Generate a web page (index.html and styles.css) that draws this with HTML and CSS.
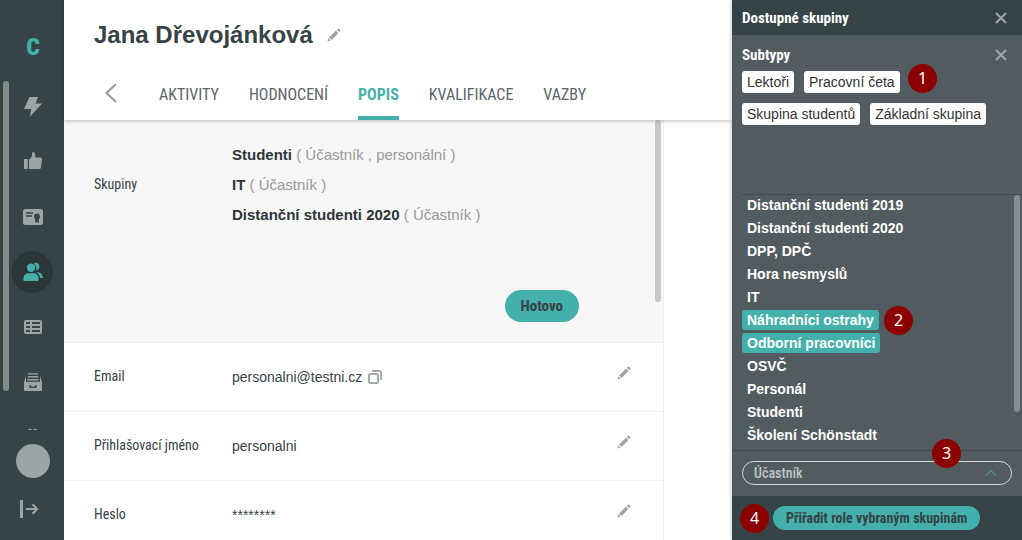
FILE: index.html
```html
<!DOCTYPE html>
<html lang="cs">
<head>
    <meta charset="UTF-8">
    <meta name="viewport" content="width=device-width, initial-scale=1">
    <title>Jana Dřevojánková</title>
    <link rel="stylesheet" href="styles.css">
</head>
<body>
    <!-- shared icons -->
    <svg class="sprite" aria-hidden="true">
        <symbol id="pencil" viewBox="0 0 14 14">
            <path d="M0.5 13.5 L1.4 10.2 L3.8 12.6 Z M2.1 9.4 L9 2.6 L11.4 5 L4.6 11.9 Z M9.8 1.8 L11 .7 Q11.5.3 12 .7 L13.3 2 Q13.7 2.5 13.3 3 L12.2 4.2 Z"/>
        </symbol>
        <symbol id="close" viewBox="0 0 12 12">
            <path d="M1 1 L11 11 M11 1 L1 11"/>
        </symbol>
    </svg>

    <div class="app">
        <aside class="sidebar">
            <a class="logo" href="#">C</a>
            <nav class="menu">
                <div class="scrollbar menu-scroll"></div>
                <a class="menu-item" href="#" aria-label="Aktivity">
                    <svg width="20" height="20" viewBox="0 0 20 20"><path d="M6.5 0 H15 L12.5 6.5 H19 L7 19.8 L8.2 12 H1 Z"/></svg>
                </a>
                <a class="menu-item" href="#" aria-label="Hodnocení">
                    <svg width="20" height="20" viewBox="0 0 20 20"><path d="M1 7 H4.8 V17 H1 Z M6 7.5 L9 4.5 V.8 Q9.2 0 10.3 0 Q12.3.5 12.3 2.7 V5.4 H17.5 Q19.3 5.6 19 7.4 L18 15.5 Q17.6 17 16 17 H6 Z"/></svg>
                </a>
                <a class="menu-item" href="#" aria-label="Kvalifikace">
                    <svg width="20" height="20" viewBox="0 0 20 20">
                        <rect x="0" y="2" width="20" height="16" rx="2.5"/>
                        <path class="cut thin" d="M3 6 H10 M3 9 H9"/>
                        <circle class="hole" cx="14" cy="9.5" r="3"/>
                        <path class="hole" d="M12.2 11 H15.8 V16 L14 15 L12.2 16 Z"/>
                    </svg>
                </a>
                <a class="menu-item active" href="#" aria-label="Lidé">
                    <svg width="20" height="20" viewBox="0 0 20 20">
                        <path d="M11 1.5 Q12 .6 13.3 .8 Q16.4 1.3 16.4 4.5 Q16.4 8 13.2 8.6 Q14.2 5 11 1.5 Z M13.5 10 Q19.5 10 20 16 H17 Q16.7 12 13.5 10 Z"/>
                        <circle cx="8" cy="5.8" r="4.2"/>
                        <path d="M.5 19 V16 Q1 11.3 5.5 11.3 H10.5 Q15 11.3 15.5 16 V19 Z"/>
                    </svg>
                </a>
                <a class="menu-item" href="#" aria-label="Tabulky">
                    <svg width="20" height="20" viewBox="0 0 20 20">
                        <rect x="1" y="3" width="18" height="14" rx="2"/>
                        <path class="cut" d="M3 6 H7 M3 10 H7 M3 14 H7 M9 6 H17 M9 10 H17 M9 14 H17"/>
                    </svg>
                </a>
                <a class="menu-item" href="#" aria-label="Archiv">
                    <svg width="20" height="20" viewBox="0 0 20 20">
                        <path d="M3 3.5 V10.5 H17 V3.5 L19 10.5 V17.5 Q19 19 17.6 19 H2.4 Q1 19 1 17.5 V10.5 Z"/>
                        <path class="hole" d="M3.4 3 H16.6 V10 H3.4 Z"/>
                        <path d="M5 1.2 H15 V2.4 H5 Z M4.7 4 H15.3 V5.4 H4.7 Z M4.4 7 H15.6 V8.4 H4.4 Z M3 9.8 H17 V11 H3 Z"/>
                        <path class="cut thin" d="M7.2 13 V15.2 H12.8 V13"/>
                    </svg>
                </a>
                <a class="menu-item" href="#" aria-label="Další">
                    <svg width="20" height="20" viewBox="0 0 20 20"><path d="M5 3 Q7 .6 9 3 V9 H5 Z M10 3 Q12 .6 14 3 V9 H10 Z"/></svg>
                </a>
            </nav>
            <div class="user">
                <a class="avatar" href="#" aria-label="Profil"></a>
                <button class="icon-btn logout" aria-label="Odhlásit">
                    <svg width="20" height="20" viewBox="0 0 20 20"><path d="M2.5 1 V19" stroke-width="3"/><path d="M7 10 H18 M13.5 5.3 L18.2 10 L13.5 14.7" stroke-width="2"/></svg>
                </button>
            </div>
        </aside>

        <main class="content">
            <header class="header">
                <div class="title">
                    <h1>Jana Dřevojánková</h1>
                    <button class="icon-btn" aria-label="Upravit jméno"><svg class="pencil"><use href="#pencil"/></svg></button>
                </div>
                <nav class="tabs">
                    <button class="icon-btn back" aria-label="Zpět">
                        <svg width="12" height="20" viewBox="0 0 12 20"><path d="M11 1 L1.5 10 L11 19"/></svg>
                    </button>
                    <a class="tab" href="#">AKTIVITY</a>
                    <a class="tab" href="#">HODNOCENÍ</a>
                    <a class="tab active" href="#">POPIS</a>
                    <a class="tab" href="#">KVALIFIKACE</a>
                    <a class="tab" href="#">VAZBY</a>
                </nav>
            </header>

            <div class="details">
                <div class="scrollbar details-scroll"></div>
                <section class="row groups">
                    <div class="label">Skupiny</div>
                    <div class="value">
                        <ul class="group-list">
                            <li><b>Studenti</b> ( Účastník , personální )</li>
                            <li><b>IT</b> ( Účastník )</li>
                            <li><b>Distanční studenti 2020</b> ( Účastník )</li>
                        </ul>
                        <button class="btn btn-done">Hotovo</button>
                    </div>
                </section>
                <section class="row">
                    <div class="label">Email</div>
                    <div class="value">personalni@testni.cz
                        <button class="icon-btn copy" aria-label="Kopírovat">
                            <svg width="14" height="14" viewBox="0 0 14 14"><rect x="1" y="4" width="9" height="9" rx="1.5"/><path d="M4 1 H11 Q13 1 13 3 V10"/></svg>
                        </button>
                    </div>
                    <button class="icon-btn edit" aria-label="Upravit email"><svg class="pencil"><use href="#pencil"/></svg></button>
                </section>
                <section class="row">
                    <div class="label">Přihlašovací jméno</div>
                    <div class="value">personalni</div>
                    <button class="icon-btn edit" aria-label="Upravit přihlašovací jméno"><svg class="pencil"><use href="#pencil"/></svg></button>
                </section>
                <section class="row">
                    <div class="label">Heslo</div>
                    <div class="value">********</div>
                    <button class="icon-btn edit" aria-label="Upravit heslo"><svg class="pencil"><use href="#pencil"/></svg></button>
                </section>
            </div>
        </main>

        <aside class="panel">
            <header class="panel-header">
                <h2>Dostupné skupiny</h2>
                <button class="icon-btn" aria-label="Zavřít"><svg class="close"><use href="#close"/></svg></button>
            </header>
            <section class="subtypes">
                <div class="subtypes-head">
                    <h2>Subtypy</h2>
                    <button class="icon-btn" aria-label="Zrušit výběr"><svg class="close"><use href="#close"/></svg></button>
                </div>
                <div class="chips">
                    <button class="chip">Lektoři</button>
                    <button class="chip">Pracovní četa</button>
                    <button class="chip">Skupina studentů</button>
                    <button class="chip">Základní skupina</button>
                </div>
                <span class="marker marker-1">1</span>
            </section>
            <section class="available">
                <div class="scrollbar available-scroll"></div>
                <ul>
                    <li><button class="option">Distanční studenti 2019</button></li>
                    <li><button class="option">Distanční studenti 2020</button></li>
                    <li><button class="option">DPP, DPČ</button></li>
                    <li><button class="option">Hora nesmyslů</button></li>
                    <li><button class="option">IT</button></li>
                    <li><button class="option selected">Náhradníci ostrahy</button><span class="marker marker-2">2</span></li>
                    <li><button class="option selected">Odborní pracovníci</button></li>
                    <li><button class="option">OSVČ</button></li>
                    <li><button class="option">Personál</button></li>
                    <li><button class="option">Studenti</button></li>
                    <li><button class="option">Školení Schönstadt</button></li>
                </ul>
            </section>
            <section class="role">
                <select class="role-select" aria-label="Role">
                    <option>Účastník</option>
                </select>
                <svg class="role-arrow" width="12" height="8" viewBox="0 0 12 8"><path d="M1 6.5 L6 1.5 L11 6.5"/></svg>
                <span class="marker marker-3">3</span>
            </section>
            <footer class="panel-footer">
                <span class="marker">4</span>
                <button class="btn btn-assign">Přiřadit role vybraným skupinám</button>
            </footer>
        </aside>
    </div>
</body>
</html>
```
FILE: styles.css
```css
:root {
    --teal: #44b0ab;
    --dark: #364347;
    --slate: #525c60;
    --grey: #9da4a6;
    --line: #f0f0f0;
    --condensed: "Roboto Condensed", "Liberation Sans Narrow", Roboto, sans-serif;
}

* {
    box-sizing: border-box;
}

body {
    margin: 0;
    font-family: "Liberation Sans", Arial, sans-serif;
    font-size: 14px;
    color: var(--dark);
    background: white;
}

h1, h2, ul {
    margin: 0;
    padding: 0;
    list-style: none;
}

a {
    color: inherit;
    text-decoration: none;
}

button {
    border: none;
    font: inherit;
    cursor: pointer;
}

svg {
    display: block;
}

.sprite {
    position: absolute;
    width: 0;
    height: 0;
}

.app {
    display: flex;
    height: 100vh;
    overflow: hidden;
}

.icon-btn {
    padding: 0;
    background: none;
    flex: none;
}

.pencil {
    width: 14px;
    height: 14px;
    fill: var(--grey);
}

.close {
    width: 12px;
    height: 12px;
    stroke: #a0a6a8;
    stroke-width: 2;
}

.scrollbar {
    position: absolute;
    width: 6px;
    border-radius: 3px;
}

/* sidebar */

.sidebar {
    flex: none;
    width: 64px;
    display: flex;
    flex-direction: column;
    background: var(--dark);
}

.logo {
    padding: 32px 0 18px 2px;
    font: 900 24px/30px var(--condensed);
    text-align: center;
    color: var(--teal);
}

.menu {
    position: relative;
    flex: 1;
    min-height: 0;
    overflow: hidden;
}

.menu-scroll {
    top: 1px;
    left: 3px;
    height: 310px;
    background: #848b8d;
}

.menu-item {
    display: flex;
    align-items: center;
    justify-content: center;
    height: 55px;
    padding: 0 0 2px 2px;
}

.menu-item svg {
    fill: var(--grey);
}

.menu-item .cut {
    fill: none;
    stroke: var(--dark);
    stroke-width: 2;
}

.menu-item .thin {
    stroke-width: 1.5;
}

.menu-item .hole {
    fill: var(--dark);
}

.menu-item.active {
    width: 42px;
    height: 42px;
    margin: 6px 11px 7px;
    padding-bottom: 0;
    border-radius: 50%;
    background: #2b3639;
}

.menu-item.active svg {
    fill: var(--teal);
}

.user {
    display: flex;
    flex-direction: column;
    align-items: center;
    padding: 14px 0 21px 2px;
}

.avatar {
    width: 34px;
    height: 34px;
    border-radius: 50%;
    background: var(--grey);
}

.logout {
    margin: 21px 8px 0 0;
}

.logout svg {
    fill: none;
    stroke: var(--grey);
}

/* person detail */

.content {
    flex: 1;
    min-width: 0;
}

.header {
    position: relative;
    z-index: 1;
    padding: 20px 30px 0;
    background: white;
    box-shadow: 0 1px 4px rgba(0, 0, 0, 0.25);
}

.title {
    display: flex;
    align-items: center;
    gap: 14px;
    height: 30px;
}

h1 {
    font-size: 24px;
    line-height: 30px;
}

.tabs {
    display: flex;
    gap: 30px;
    height: 70px;
    padding: 18px 0 0 11px;
}

.back {
    height: 50px;
    margin-right: 12px;
}

.back svg {
    fill: none;
    stroke: #999;
    stroke-width: 2;
}

.tab {
    font: 16px/54px var(--condensed);
    color: #5c6569;
}

.tab.active {
    font-weight: bold;
    color: var(--teal);
    border-bottom: 4px solid var(--teal);
}

.details {
    position: relative;
    max-width: 600px;
    border-right: 1px solid var(--line);
}

.details-scroll {
    top: 0;
    right: 2px;
    height: 182px;
    background: #c8c8c8;
}

.row {
    display: flex;
    align-items: center;
    height: 69px;
    padding: 0 32px 0 30px;
    border-bottom: 1px solid var(--line);
}

.label {
    flex: none;
    width: 138px;
    padding-bottom: 2px;
    font: 14px/20px var(--condensed);
}

.value {
    flex: 1;
    display: flex;
    align-items: center;
    gap: 6px;
}

.edit {
    padding-bottom: 8px;
}

.copy svg {
    fill: none;
    stroke: #a5abad;
    stroke-width: 2;
}

.groups {
    align-items: flex-start;
    height: auto;
    padding: 20px 84px 20px 30px;
    background: #f7f7f7;
}

.groups .label {
    padding-top: 34px;
}

.groups .value {
    flex-direction: column;
    align-items: stretch;
    gap: 60px;
}

.group-list {
    font-size: 15px;
    line-height: 30px;
    color: #999;
}

.group-list b {
    color: #2b3639;
}

.btn {
    border-radius: 16px;
    background: var(--teal);
    color: var(--dark);
    font-family: var(--condensed);
    font-weight: bold;
}

.btn-done {
    align-self: flex-end;
    height: 32px;
    padding: 0 16px;
    font-size: 15px;
}

/* right panel */

.panel {
    flex: none;
    width: 290px;
    display: flex;
    flex-direction: column;
    position: relative;
    z-index: 2;
    background: var(--slate);
    box-shadow: 0 0 4px rgba(0, 0, 0, 0.3);
    color: white;
}

h2 {
    font: bold 15px/20px var(--condensed);
}

.panel-header, .subtypes-head {
    display: flex;
    align-items: center;
    justify-content: space-between;
}

.panel-header {
    height: 35px;
    padding: 0 15px 0 10px;
    background: var(--dark);
}

.subtypes {
    position: relative;
    height: 159px;
    padding: 10px 15px 0 10px;
}

.chips {
    display: flex;
    flex-wrap: wrap;
    gap: 10px;
    padding-top: 6px;
}

.chip {
    height: 22px;
    padding: 0 5px;
    border-radius: 3px;
    background: white;
    color: #333;
}

.available {
    position: relative;
    flex: 1;
    min-height: 0;
    margin-left: 10px;
    overflow: hidden;
    border-top: 1px solid #414a4d;
}

.available-scroll {
    top: 0;
    right: 2px;
    height: 217px;
    background: #868c8f;
}

.available li {
    display: flex;
    position: relative;
    height: 23px;
}

.option {
    height: 20px;
    padding: 0 5px;
    border-radius: 3px;
    background: none;
    color: white;
    font-weight: bold;
}

.option.selected {
    background: var(--teal);
}

.role {
    position: relative;
    padding: 10px 10px 11px;
    border-top: 1px solid #414a4d;
}

.role-select {
    display: block;
    width: 100%;
    height: 24px;
    padding: 0 11px;
    appearance: none;
    border: 1px solid #d5d8d9;
    border-radius: 12px;
    background: none;
    color: #bfc3c4;
    font: 500 14px var(--condensed);
}

.role-arrow {
    position: absolute;
    top: 18px;
    right: 25px;
    fill: none;
    stroke: var(--teal);
    pointer-events: none;
}

.panel-footer {
    display: flex;
    align-items: center;
    gap: 4px;
    height: 44px;
    padding: 0 8px;
    background: var(--dark);
}

.btn-assign {
    height: 24px;
    padding: 0 13px;
    white-space: nowrap;
}

/* numbered callouts */

.marker {
    flex: none;
    width: 29px;
    height: 29px;
    border-radius: 50%;
    background: #8b0000;
    color: white;
    font: 16px/29px "Noto Sans", sans-serif;
    text-align: center;
}

.marker-1, .marker-2, .marker-3 {
    position: absolute;
}

.marker-1 {
    top: 29px;
    left: 176px;
}

.marker-2 {
    top: -4px;
    left: 142px;
    z-index: 1;
}

.marker-3 {
    top: -12px;
    left: 200px;
}
```
